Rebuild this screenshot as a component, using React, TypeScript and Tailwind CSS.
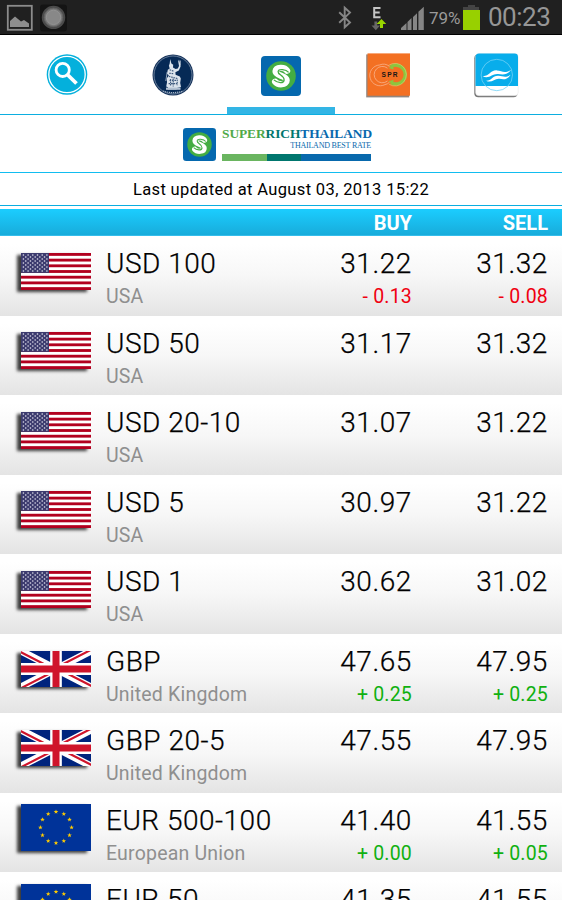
import React, { useState } from 'react';

type Country = 'us' | 'gb' | 'eu';

interface Rate {
  name: string;
  country: Country;
  buy: string;
  sell: string;
  buyChange?: string;
  sellChange?: string;
}

const COUNTRY_NAMES: Record<Country, string> = {
  us: 'USA',
  gb: 'United Kingdom',
  eu: 'European Union',
};

const RATES: Rate[] = [
  { name: 'USD 100', country: 'us', buy: '31.22', sell: '31.32', buyChange: '- 0.13', sellChange: '- 0.08' },
  { name: 'USD 50', country: 'us', buy: '31.17', sell: '31.32' },
  { name: 'USD 20-10', country: 'us', buy: '31.07', sell: '31.22' },
  { name: 'USD 5', country: 'us', buy: '30.97', sell: '31.22' },
  { name: 'USD 1', country: 'us', buy: '30.62', sell: '31.02' },
  { name: 'GBP', country: 'gb', buy: '47.65', sell: '47.95', buyChange: '+ 0.25', sellChange: '+ 0.25' },
  { name: 'GBP 20-5', country: 'gb', buy: '47.55', sell: '47.95' },
  { name: 'EUR 500-100', country: 'eu', buy: '41.40', sell: '41.55', buyChange: '+ 0.00', sellChange: '+ 0.05' },
  { name: 'EUR 50', country: 'eu', buy: '41.35', sell: '41.55' },
];

function UsFlag() {
  const stars: [number, number][] = [];
  for (let r = 0; r < 9; r++) {
    for (let c = 0; c < (r % 2 ? 5 : 6); c++) {
      stars.push([2.4 + c * 4.7 + (r % 2 ? 2.35 : 0), 2 + r * 2]);
    }
  }
  return (
    <svg width="70" height="37" viewBox="0 0 70 37" className="block">
      <rect width="70" height="37" fill="#fff" />
      {[0, 1, 2, 3, 4, 5, 6].map(i => (
        <rect key={i} y={(i * 2 * 37) / 13} width="70" height={37 / 13} fill="#b2001f" />
      ))}
      <rect width="28" height="19.9" fill="#3c3b6e" />
      {stars.map(([x, y]) => <circle key={`${x}-${y}`} cx={x} cy={y} r="0.8" fill="#e4e4f0" />)}
    </svg>
  );
}

function UkFlag() {
  return (
    <svg width="70" height="36" viewBox="0 0 60 30" preserveAspectRatio="none" className="block">
      <clipPath id="uk-diagonals">
        <path d="M30 15h30v15zM30 15v15H0zM30 15H0V0zM30 15V0h30z" />
      </clipPath>
      <rect width="60" height="30" fill="#00247d" />
      <path d="M0 0l60 30M60 0L0 30" stroke="#fff" strokeWidth="6" />
      <path d="M0 0l60 30M60 0L0 30" stroke="#cf142b" strokeWidth="3.6" clipPath="url(#uk-diagonals)" />
      <path d="M30 0v30M0 15h60" stroke="#fff" strokeWidth="10" />
      <path d="M30 0v30M0 15h60" stroke="#cf142b" strokeWidth="6" />
    </svg>
  );
}

function EuFlag() {
  return (
    <svg width="70" height="47" viewBox="0 0 70 47" className="block">
      <rect width="70" height="47" fill="#003399" />
      {Array.from({ length: 12 }, (_, i) => {
        const a = (i * Math.PI) / 6;
        return (
          <path
            key={i}
            transform={`translate(${35 + 15.6 * Math.sin(a)} ${23.4 - 15.6 * Math.cos(a)})`}
            d="M0-2.4L.6-.75 2.3-.72.95.35 1.4 1.95 0 1-1.4 1.95-.95.35-2.3-.72-.6-.75z"
            fill="#ffcc00"
          />
        );
      })}
    </svg>
  );
}

function Flag({ country }: { country: Country }) {
  return (
    <div className="shadow-[-4px_2px_3px_rgba(0,0,0,0.75)]">
      {country === 'us' && <UsFlag />}
      {country === 'gb' && <UkFlag />}
      {country === 'eu' && <EuFlag />}
    </div>
  );
}

function SearchIcon() {
  return (
    <svg width="42" height="42" viewBox="0 0 42 42" className="ml-[3px]">
      <circle cx="21" cy="20.5" r="20.3" fill="#04b0dc" />
      <circle cx="21" cy="20.5" r="18.2" fill="none" stroke="#fff" strokeWidth="1.3" />
      <circle cx="16.7" cy="15.9" r="6.6" fill="none" stroke="#fff" strokeWidth="2.8" />
      <path d="M21.3 20.5l9.2 9" stroke="#fff" strokeWidth="3.8" />
    </svg>
  );
}

function BankIcon() {
  return (
    <svg width="42" height="42" viewBox="0 0 42 42">
      <circle cx="21" cy="21" r="20.5" fill="#16335b" />
      <circle cx="21" cy="21" r="19" fill="#062a56" stroke="#9fb0c5" strokeWidth="0.6" />
      {/* seated figure */}
      <path d="M18.2 5l1.2 4.4 1.8 1.4-.2 2.6 2.6 1.6 2.2-.6 1.2-2.4-.8-4.4.8-2 .8 2.6.8 4.4-1.8 3.8-3.4 1.8.2 2.6 4.2 1.6 1 2-.6 4.5.8 4.2-4.2.8-.2 1.7H15.8l.2-2.4-1.8-.8.8-4-.2-3.9 2-3.2-1.8-1.6.8-3.9 1.9-1.3-.8-2.7.8-2.4z" fill="#dbe3eb" />
      <path d="M28.4 6.5v5M15.2 18l-1.4 9" stroke="#b6c4d3" strokeWidth=".8" fill="none" />
      <path d="M17.6 15.8l4 1.4M17.2 19.2l4 .4M16.8 22.4l9 2.2M17.6 26.4h7M16.6 29.6h8.6M21.2 24.4v8M25.2 25.6v5.6M18.6 25v7" stroke="#3d597d" strokeWidth="1.1" strokeDasharray="1.6 .8" fill="none" />
      <path d="M14 33.6h14.5v2.2H14z" fill="#b4c2d2" />
      <path d="M11 37q10 3.2 20 0" fill="none" stroke="#a4b3c6" strokeWidth="1.2" strokeDasharray="1.2 .8" />
    </svg>
  );
}

function SuperRichIcon({ size }: { size: number }) {
  return (
    <svg width={size} height={size} viewBox="0 0 40 40">
      <rect width="40" height="40" rx="4" fill="#0568ae" />
      <circle cx="20" cy="20" r="14.8" fill="#44ad42" />
      <path d="M26 14.6C23.6 10.8 15 10.8 14.6 15.4c-.4 4.6 10.9 4.2 11 8.9.1 4.8-8.6 5-11.4 1.5" fill="none" stroke="#fff" strokeWidth="6.4" strokeLinecap="round" />
      <path d="M27.6 16.4c-2.6-3.1-10-4-10.5-.9-.5 3.6 6.2 3.6 6 8.6-.2 3.4-6.6 3.2-10.2-.2" fill="none" stroke="#44ad42" strokeWidth="1.3" />
    </svg>
  );
}

function SprIcon() {
  return (
    <svg width="45" height="45" viewBox="0 0 45 45" className="mr-[2px]">
      <rect x="0.2" y="1.4" width="43" height="43" fill="#92867f" />
      <rect x="1.5" y="0.4" width="42.5" height="42.3" fill="#f37023" />
      <g fill="none">
        <path d="M23.5 13.4A9.8 9.8 0 0 0 13.5 12 10.4 10.4 0 1 0 19 31.6q3-.5 4.6-2.6" stroke="#f9b38c" strokeWidth=".8" />
        <path d="M21.5 15.2A8.2 8.2 0 1 0 21.5 28" stroke="#f9b38c" strokeWidth=".8" />
        <path d="M24.6 13.8A9.4 9.4 0 1 1 25 29.6" stroke="#8cc63f" strokeWidth="3.4" />
        <path d="M22.6 12.4A11.3 11.3 0 1 1 23 31.2" stroke="#d6e58d" strokeWidth=".5" />
      </g>
      <path d="M22.6 15l4.6-2.8.4 4.4zM22.6 28.4l4.4 2.6.6-4.2z" fill="#8cc63f" />
      <text x="15.6" y="23.8" className="font-['Liberation_Sans'] text-[6.6px] font-bold" textLength="16" fill="#171717">SPR</text>
    </svg>
  );
}

function WaveIcon() {
  return (
    <svg width="45" height="45" viewBox="0 0 45 45" className="mr-[2px]">
      <rect x="0.3" y="1.2" width="43.2" height="43" rx="4" fill="#777" />
      <rect x="1.5" y="0.5" width="42.7" height="42.2" rx="3.5" fill="#fff" stroke="#ddd" strokeWidth=".4" />
      <path d="M1.5 33V4A3.5 3.5 0 0 1 5 .5h35.5A3.5 3.5 0 0 1 44 4v29z" fill="#08adeb" />
      <circle cx="22.8" cy="22" r="15.7" fill="none" stroke="#72d1f5" strokeWidth=".8" />
      <path d="M8.4 23.2c7 .6 7.8-6.4 14.6-5.8 5 .4 7.4 3.6 14.2-.6-4.4 6-9.2 4.6-13.2 4.2-6-.6-8.6 5.4-15.6 2.2z" fill="#fff" />
      <path d="M12 27.8c5.6.4 6.4-5.4 12.4-5 4.6.2 6.8 2.6 12.2-1-3.6 5.6-7.6 4.4-11.2 4-5.2-.6-7.4 4.8-13.4 2z" fill="#fff" />
    </svg>
  );
}

function StatusBar() {
  return (
    <div className="flex h-[35px] shrink-0 items-start border-b border-black bg-[#202020]">
      <svg width="70" height="34" viewBox="0 0 70 34">
        <rect x="7.8" y="5.8" width="24" height="24" fill="none" stroke="#8b8b8b" strokeWidth="1.8" />
        <path d="M10 27v-6l5-4.5 6 5 3-1.5 5 3.5V27z" fill="#8e8e8e" />
        <rect x="40" y="4.5" width="27" height="27" rx="3" fill="#141414" />
        <circle cx="53.5" cy="17.4" r="11.7" fill="#4b4b4b" />
        <circle cx="53.5" cy="17.4" r="9.3" fill="#777" stroke="#626262" />
        <circle cx="53.5" cy="17.4" r="7.2" fill="#888" stroke="#999" strokeWidth=".7" />
      </svg>
      <svg width="90" height="34" viewBox="0 0 90 34" className="ml-[266px]">
        <path d="M3.2 12.3L14 22.5l-5.3 4.8V7.7l5.3 4.9L3.2 22.8" fill="none" stroke="#858585" strokeWidth="1.9" />
        <path d="M44.5 8.1h-6.3v9.2h6.3M38.2 12.6h5.5" fill="none" stroke="#c5c5c5" strokeWidth="2" />
        <path d="M38.4 21.5v4h-2.9l4.3 4.7 4.3-4.7h-2.9v-4z" fill="#666" />
        <path d="M44 28v-4h-3.5l5-5 4.8 5H47v4z" fill="#99d500" />
        <path d="M65 30v-2l5.5-5v7zM71.5 30v-8l4-4v12zM77 30V17l4-3.8V30zM82.4 30V11.8l5.4-5V30z" fill="#858585" />
      </svg>
      <span className="ml-[3px] w-[33px] whitespace-nowrap text-[17px] leading-[36px] tracking-[-0.1px] text-[#9a9a9a]">79%</span>
      <svg width="18" height="34" viewBox="0 0 18 34">
        <path d="M6 7V5h7v2h4v3H1V7z" fill="#444" />
        <rect x="1" y="10" width="17" height="20" fill="#98d000" />
      </svg>
      <span className="ml-[8px] whitespace-nowrap text-[26px] leading-[35px] tracking-[-0.5px] text-[#969696]">00:23</span>
    </div>
  );
}

const TABS = [
  { id: 'search', icon: <SearchIcon /> },
  { id: 'bank', icon: <BankIcon /> },
  { id: 'superrich', icon: <SuperRichIcon size={40} /> },
  { id: 'spr', icon: <SprIcon /> },
  { id: 'wave', icon: <WaveIcon /> },
];

function Price({ value }: { value: string }) {
  return (
    <p className="mb-[2px] text-[28px] font-light leading-[36px] tracking-[0.6px] text-black [-webkit-text-stroke:0.25px_black]">
      {value}
    </p>
  );
}

function Change({ value }: { value?: string }) {
  return (
    <p className={`h-6 text-[19.5px] leading-[25px] tracking-[0.2px] ${value?.startsWith('-') ? 'text-[#f00010]' : 'text-[#10b010]'}`}>
      {value}
    </p>
  );
}

function RateRow({ rate }: { rate: Rate }) {
  return (
    <div className="flex h-[79.5px] shrink-0 bg-gradient-to-b from-white from-10% via-[#f7f7f7] via-50% to-[#e4e4e4] pr-[14px]">
      <div className="flex h-[70px] w-[106px] items-center pl-[21px]">
        <Flag country={rate.country} />
      </div>
      <div className="flex-1 pt-[10px]">
        <h2 className="whitespace-nowrap text-[28px] font-light leading-[36px] tracking-[0.5px] text-black [-webkit-text-stroke:0.25px_black]">
          {rate.name}
        </h2>
        <p className="mt-[2px] text-[19.5px] leading-[25px] tracking-[0.2px] text-[#8f8f8f]">{COUNTRY_NAMES[rate.country]}</p>
      </div>
      <div className="w-[100px] pt-[10px] text-right">
        <Price value={rate.buy} />
        <Change value={rate.buyChange} />
      </div>
      <div className="w-[136px] pt-[10px] text-right">
        <Price value={rate.sell} />
        <Change value={rate.sellChange} />
      </div>
    </div>
  );
}

export default function App() {
  const [activeTab, setActiveTab] = useState('superrich');

  return (
    <div className="flex h-[900px] w-[562px] flex-col overflow-hidden bg-white font-[Roboto,sans-serif]">
      <StatusBar />

      {/* Tabs */}
      <nav className="flex h-20 shrink-0 justify-center border-b-[1.5px] border-[#0caee0]">
        {TABS.map(tab => (
          <button
            key={tab.id}
            onClick={() => setActiveTab(tab.id)}
            className={`flex w-[108px] items-center justify-center border-b-[7px] ${
              tab.id === 'superrich' ? 'pt-[10px]' : 'pt-2'
            } ${activeTab === tab.id ? 'border-[#33b5e5]' : 'border-transparent'}`}
          >
            {tab.icon}
          </button>
        ))}
      </nav>

      {/* Brand */}
      <div className="flex h-[58px] shrink-0 justify-center border-b border-[#12bdf0] pr-[8px] pt-[13px]">
        <SuperRichIcon size={33} />
        <div className="ml-[6px] w-[149px] font-['Liberation_Serif',serif]">
          <p className="flex h-[13px] whitespace-nowrap text-[13.4px] font-bold leading-[12px] tracking-[-0.06px]">
            <span className="text-[#50a949]">SUPER</span>
            <span className="text-[#00766e]">RICH</span>
            <span className="text-[#0869ad]">THAILAND</span>
          </p>
          <p className="h-[13px] whitespace-nowrap text-right text-[8px] leading-[10px] tracking-[-0.22px] text-[#0869ad]">THAILAND BEST RATE</p>
          <div className="flex h-[7px]">
            <div className="w-[45px] bg-[#6ab560]" />
            <div className="w-[34px] bg-[#00766e]" />
            <div className="flex-1 bg-[#0869ad]" />
          </div>
        </div>
      </div>

      <p className="h-[33px] shrink-0 border-b border-[#0caee0] text-center text-[16.5px] leading-[34px] tracking-[0.36px] text-black">
        Last updated at August 03, 2013 15:22
      </p>

      {/* Column headings */}
      <div className="mt-[3px] flex h-[27px] shrink-0 justify-end border-b border-[#35bdeb] bg-gradient-to-b from-[#1bcdff] to-[#18acdb] pr-[14px] text-right text-[20px] font-bold leading-[29px] text-white">
        <span className="w-[100px]">BUY</span>
        <span className="w-[136px]">SELL</span>
      </div>

      {/* Rates */}
      <main className="flex flex-col">
        {RATES.map(rate => <RateRow key={rate.name} rate={rate} />)}
      </main>
    </div>
  );
}
